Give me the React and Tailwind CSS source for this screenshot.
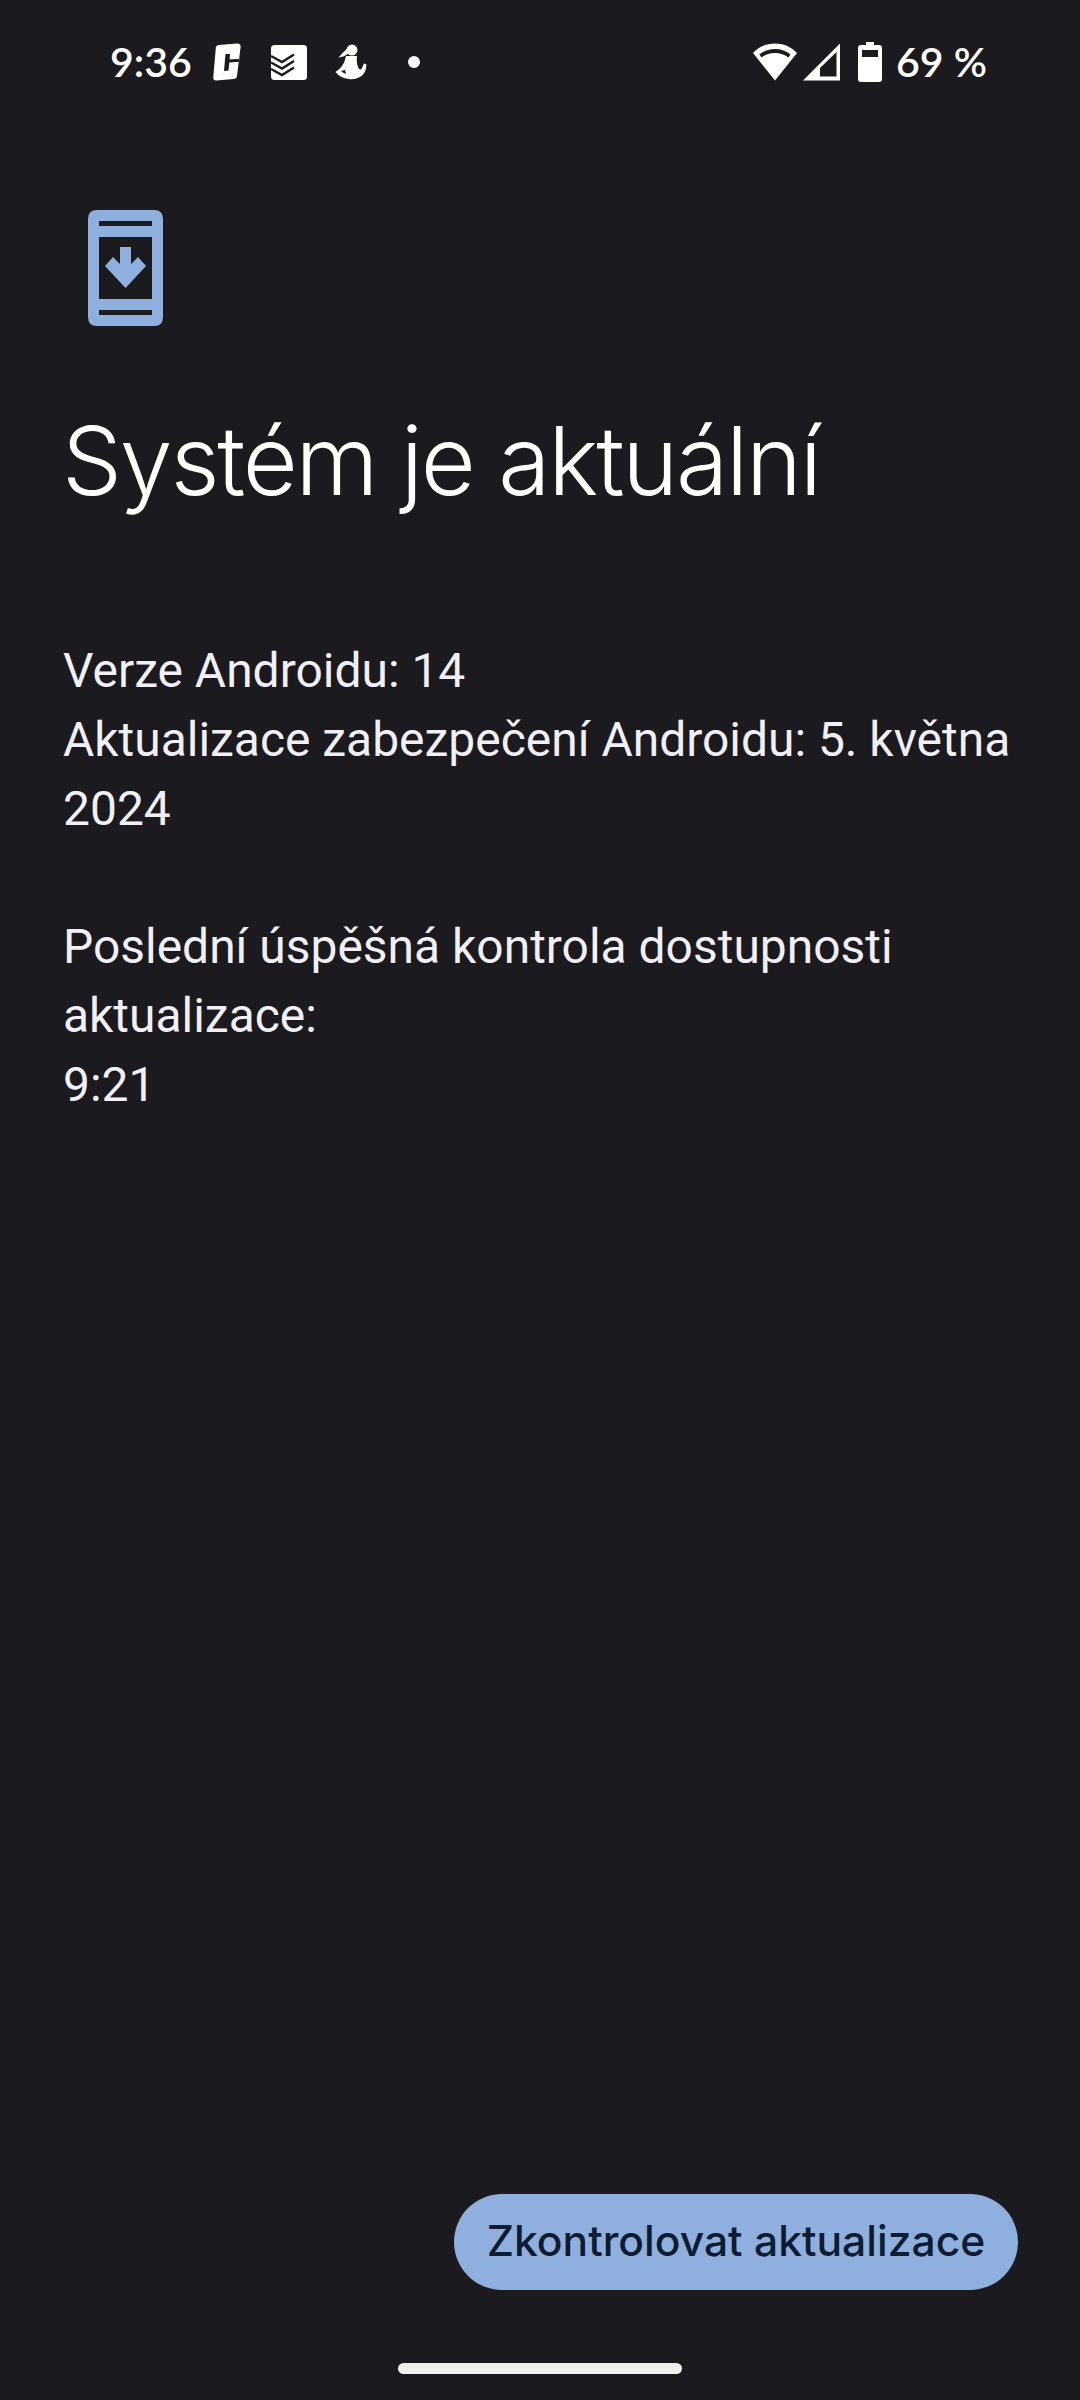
function GLogo() {
  return (
    <svg width="28" height="38" viewBox="0 0 28 38" fill="none">
      <path
        fillRule="evenodd"
        d="M6 2 L24 0.5 Q28 0.3 27.6 4 L24 33 Q23.5 35.8 20.5 36 L3.5 37.5 Q0 37.8 0.3 34 L2.8 5 Q3 2.3 6 2 Z M12.5 11 L11 28 L15.5 27.6 L16.3 19.5 L26 18.8 L26.4 15.8 L16.6 16.4 L17 11 Z"
        fill="#fff"
      />
    </svg>
  );
}

function TodoistLogo() {
  return (
    <svg width="36" height="35" viewBox="0 0 36 35" fill="none">
      <rect width="36" height="35" rx="3.5" fill="#fff" />
      <path
        d="M0 11 L11 17 L23 9.5 M0 17.5 L11 23.5 L23 16 M0 24 L11 30 L23 22.5"
        stroke="#1b1b1f"
        strokeWidth="2.4"
      />
    </svg>
  );
}

function RunnerLogo() {
  return (
    <svg width="32" height="36" viewBox="0 0 32 36" fill="none">
      <circle cx="17" cy="6" r="5.5" fill="#fff" />
      <path d="M13 4 Q8 8 3.5 13.5 Q9 13 14 9 Z" fill="#fff" />
      <path
        d="M11 12 L22 12 Q21 19 23.5 24 Q25.5 27 27 24 L29 19.5 L31.5 20.5 Q31 30 25 33 Q19 36 14 35 Q5 34 0.5 28 Q5 25 7 22 Q10 18 11 12 Z M6 27 Q8 29 11 30 L10 26 Z"
        fillRule="evenodd"
        fill="#fff"
      />
    </svg>
  );
}

function WifiIcon() {
  return (
    <svg width="46" height="38" viewBox="0 0 46 38" fill="none">
      <path
        fillRule="evenodd"
        d="M23 0.5 C31 0.5 39 3.5 45 10 L23 37.5 L1 10 C7 3.5 15 0.5 23 0.5 Z M23 6 C17 6 11.5 8 7.5 11.5 L9.5 14.5 C13.5 11.5 18 10 23 10 C28 10 32.5 11.5 36.5 14.5 L38.5 11.5 C34.5 8 29 6 23 6 Z"
        fill="#fff"
      />
    </svg>
  );
}

function SignalIcon() {
  return (
    <svg width="38" height="38" viewBox="0 0 38 38" fill="none">
      <path
        fillRule="evenodd"
        d="M37 0.5 V37.5 H0 Z M33.5 9 L17 25 V33.5 H33.5 Z"
        fill="#fff"
      />
    </svg>
  );
}

function BatteryIcon() {
  return (
    <svg width="24" height="40" viewBox="0 0 24 40" fill="none">
      <path
        fillRule="evenodd"
        d="M8 0 H16 V3 H21 Q24 3 24 6 V37 Q24 40 21 40 H3 Q0 40 0 37 V6 Q0 3 3 3 H8 Z M4 8 V15 H20 V8 Z"
        fill="#fff"
      />
    </svg>
  );
}

function SystemUpdateIcon() {
  return (
    <svg width="75" height="116" viewBox="0 0 75 116" fill="none">
      <path
        fillRule="evenodd"
        d="M9 0 H66 Q75 0 75 9 V107 Q75 116 66 116 H9 Q0 116 0 107 V9 Q0 0 9 0 Z M11 11 V16 H64 V11 Z M11 27 V89 H64 V27 Z M11 100 V105 H64 V100 Z"
        fill="#8fb0de"
      />
      <path
        d="M32 37 H43 V54 L50 47 L58 56 L37.5 78 L17 56 L25 47 L32 54 Z"
        fill="#8fb0de"
      />
    </svg>
  );
}

export default function App() {
  return (
    <div className="flex h-[2400px] w-[1080px] flex-col overflow-hidden bg-[#1b1b1f] font-['Roboto',sans-serif] text-[#f0f0f6]">
      {/* Status bar */}
      <div className="flex h-[124px] items-center justify-between pl-[110px] pr-[93px] font-['Lato',sans-serif] text-[41px] font-semibold text-white">
        <div className="flex items-center">
          <span className="w-[82px]">9:36</span>
          <span className="ml-[21px] flex"><GLogo /></span>
          <span className="ml-[30px] flex"><TodoistLogo /></span>
          <span className="ml-[28px] flex"><RunnerLogo /></span>
          <span className="ml-[41px] h-[12px] w-[12px] rounded-full bg-white" />
        </div>
        <div className="flex items-center">
          <WifiIcon />
          <span className="ml-[5px] flex"><SignalIcon /></span>
          <span className="ml-[17px] flex"><BatteryIcon /></span>
          <span className="ml-[14px]">69 %</span>
        </div>
      </div>

      <main className="flex flex-1 flex-col pl-[63px] pr-[40px]">
        <div className="ml-[25px] mt-[86px] flex">
          <SystemUpdateIcon />
        </div>
        <h1 className="-ml-[1px] mt-[77px] font-['Inter',sans-serif] text-[95px] font-[350] leading-[116px] tracking-[-2.2px] text-white">
          Systém je aktuální
        </h1>
        <div className="mt-[118px] text-[47.95px] leading-[69px]">
          <p>Verze Androidu: 14</p>
          <p>Aktualizace zabezpečení Androidu: 5. května 2024</p>
          <p className="mt-[69px]">Poslední úspěšná kontrola dostupnosti aktualizace:</p>
          <p>9:21</p>
        </div>
      </main>

      <div className="flex justify-end pr-[62px]">
        <button className="flex h-[96px] w-[564px] items-center justify-center rounded-full bg-[#8fb0de] pb-[2px] font-['Inter',sans-serif] text-[42.6px] font-medium text-[#0e1c33]">
          Zkontrolovat aktualizace
        </button>
      </div>

      <div className="flex h-[110px] items-start justify-center pt-[73px]">
        <div className="h-[11px] w-[284px] rounded-full bg-[#f0f0f0]" />
      </div>
    </div>
  );
}
